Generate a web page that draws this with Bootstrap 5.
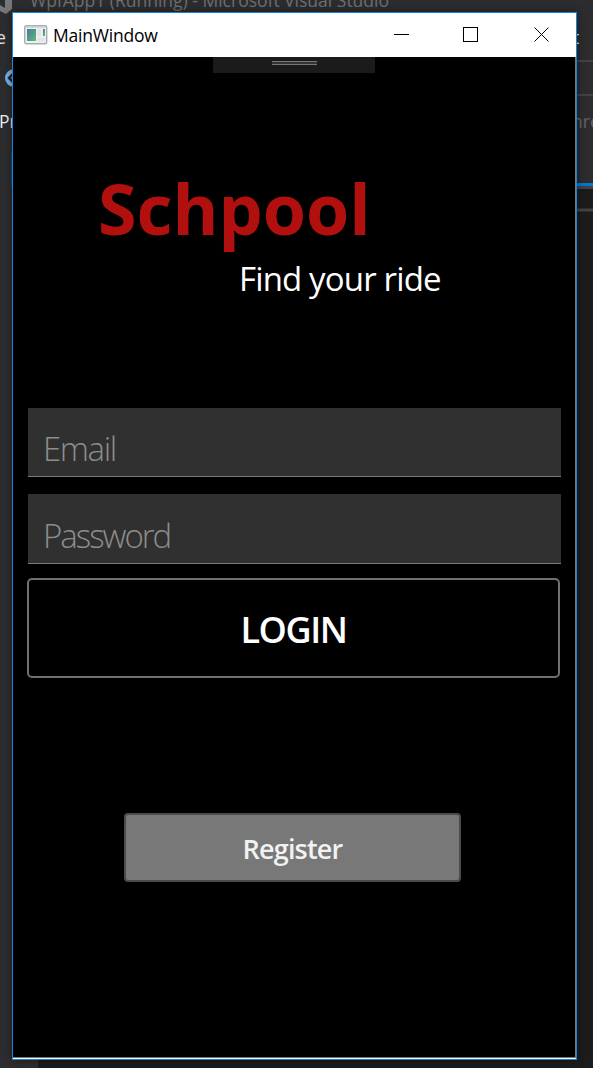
<!DOCTYPE html>
<html lang="en">
<head>
<meta charset="utf-8">
<meta name="viewport" content="width=device-width, initial-scale=1">
<title>MainWindow</title>
<link href="https://cdn.jsdelivr.net/npm/bootstrap@5.3.0/dist/css/bootstrap.min.css" rel="stylesheet">
<style>
body{width:593px;height:1068px;background:#1c1c1c;font-family:"Open Sans","Noto Sans",sans-serif}
.ide,.ide-art{width:593px;height:1068px}
.ide-art text{font-size:17.5px}
.app-window{left:12px;top:12px;width:565px;height:1048px;border:1px solid #1883d7;background:#fff;box-shadow:0 0 10px rgba(0,0,0,.4)}
.title-bar{height:44px;padding-left:11px}
.title-text{font-size:17.5px;line-height:24px;margin-left:5px;letter-spacing:-.2px;color:#000}
.client{height:1001px;background:#000;border-right:1px solid #777;border-bottom:1px solid #777}
.debug-grip{width:162px;height:16px;margin-left:200px;background:#1b1b1b}
.grip-lines{width:45px;height:4px;border-top:1px solid #777;border-bottom:1px solid #777;background:#333}
.brand-name{margin:95px 0 0 85px;font-size:70px;line-height:80px;font-weight:700;color:#b20f0f;letter-spacing:-.05px}
.tagline{margin:9px 0 0 226px;font-size:33px;line-height:44px;color:#fff;letter-spacing:-.85px}
.login-form{margin:107px 14px 0 15px}
.login-form .field{height:69px;padding:18px 15px 6px;border:0;border-bottom:1px solid #7a7a7a;border-radius:0;background:#303030;color:#fff;font-size:33px;line-height:44px;font-weight:300;letter-spacing:-1.4px}
.login-form .field::placeholder{color:#8d8d8d;opacity:1}
.login-form .field-pass{height:70px;margin-top:17px;padding-top:19px;letter-spacing:-2px}
.btn-login{width:533px;height:100px;margin:14px 0 0 -1px;border:2px solid #707070;border-radius:5px;background:#000;color:#fff;font-size:36px;font-weight:600;padding:4px 0 0;letter-spacing:-1.4px}
.btn-register{width:337px;height:69px;margin:135px 0 0 111px;border:2px solid #4b4b4b;border-radius:4px;background:#787878;color:#f2f2f2;font-size:27px;font-weight:600;padding:3px 0 0;letter-spacing:-.8px}
</style>
</head>
<body class="m-0 overflow-hidden">
<div class="ide position-relative overflow-hidden">
  <svg class="ide-art d-block" viewBox="0 0 593 1068" aria-hidden="true">
    <rect width="593" height="183" fill="#2d2d30"/>
    <rect width="12" height="1068" fill="#2d2d30"/>
    <rect y="1060" width="38" height="8" fill="#2d2d30"/>
    <path d="M0 0h12v9l-6 5-6-3z" fill="#77787a"/><path d="M0 0h5v8l-5-3z" fill="#2d2d30"/>
    <text x="30" y="7" fill="#707070" textLength="359" lengthAdjust="spacingAndGlyphs">WpfApp1 (Running) - Microsoft Visual Studio</text>
    <text x="-4" y="44" fill="#e4e4e4">e</text>
    <circle cx="14" cy="78" r="9" fill="#75b5ed"/><path d="M14 73l-5 5 5 5" fill="none" stroke="#252528" stroke-width="2.5"/>
    <text x="-1" y="128" fill="#f0f0f0">Pr</text>
    <path d="M11.5 152v34" stroke="#075080"/>
    <text x="573" y="44" fill="#e4e4e4">t</text>
    <path d="M577 61h16M577 95h16" stroke="#434346" stroke-width="2"/>
    <text x="572" y="128" fill="#656565">hre</text>
    <path d="M577 184.500h16" stroke="#007acc" stroke-width="3"/>
    <path d="M577 187.500h16M577 210h16" stroke="#434346" stroke-width="3"/>
  </svg>
  <main class="app-window position-absolute">
    <header class="title-bar d-flex align-items-center">
      <svg width="24" height="20" viewBox="0 0 24 20" aria-hidden="true">
        <defs><linearGradient id="pane" x2="1" y2="1"><stop stop-color="#437ca2"/><stop offset="1" stop-color="#62b876"/></linearGradient></defs>
        <rect x=".7" y=".7" width="22" height="18" rx="1.500" fill="#eef0f1" stroke="#a7adb2" stroke-width="1.400"/>
        <path d="M2 2.500h19.500" stroke="#d0d4d7"/>
        <rect x="3" y="4" width="9" height="12" fill="url(#pane)"/>
        <path d="M13.500 4h4v7h-4zM13.500 12.500h8v4h-8z" fill="#e3e5e5"/>
        <rect x="19" y="4" width="2" height="7" fill="url(#pane)"/>
      </svg>
      <span class="title-text">MainWindow</span>
      <svg class="ms-auto" width="208" height="44" viewBox="0 0 208 44" fill="none" stroke="#000" aria-hidden="true">
        <path d="M26 21.500h15M95.500 14.500h14v14h-14z" shape-rendering="crispEdges"/>
        <path d="M166.500 14.500l14 14M180.500 14.500l-14 14"/>
      </svg>
    </header>
    <div class="client">
      <div class="debug-grip d-flex justify-content-center"><div class="grip-lines mt-1"></div></div>
      <h1 class="brand-name">Schpool</h1>
      <p class="tagline">Find your ride</p>
      <form class="login-form">
        <input class="form-control field" type="email" placeholder="Email" aria-label="Email">
        <input class="form-control field field-pass" type="password" placeholder="Password" aria-label="Password">
        <button class="btn btn-login" type="button">LOGIN</button>
      </form>
      <button class="btn btn-register" type="button">Register</button>
    </div>
  </main>
</div>
<script src="https://cdn.jsdelivr.net/npm/bootstrap@5.3.0/dist/js/bootstrap.bundle.min.js"></script>
</body>
</html>
